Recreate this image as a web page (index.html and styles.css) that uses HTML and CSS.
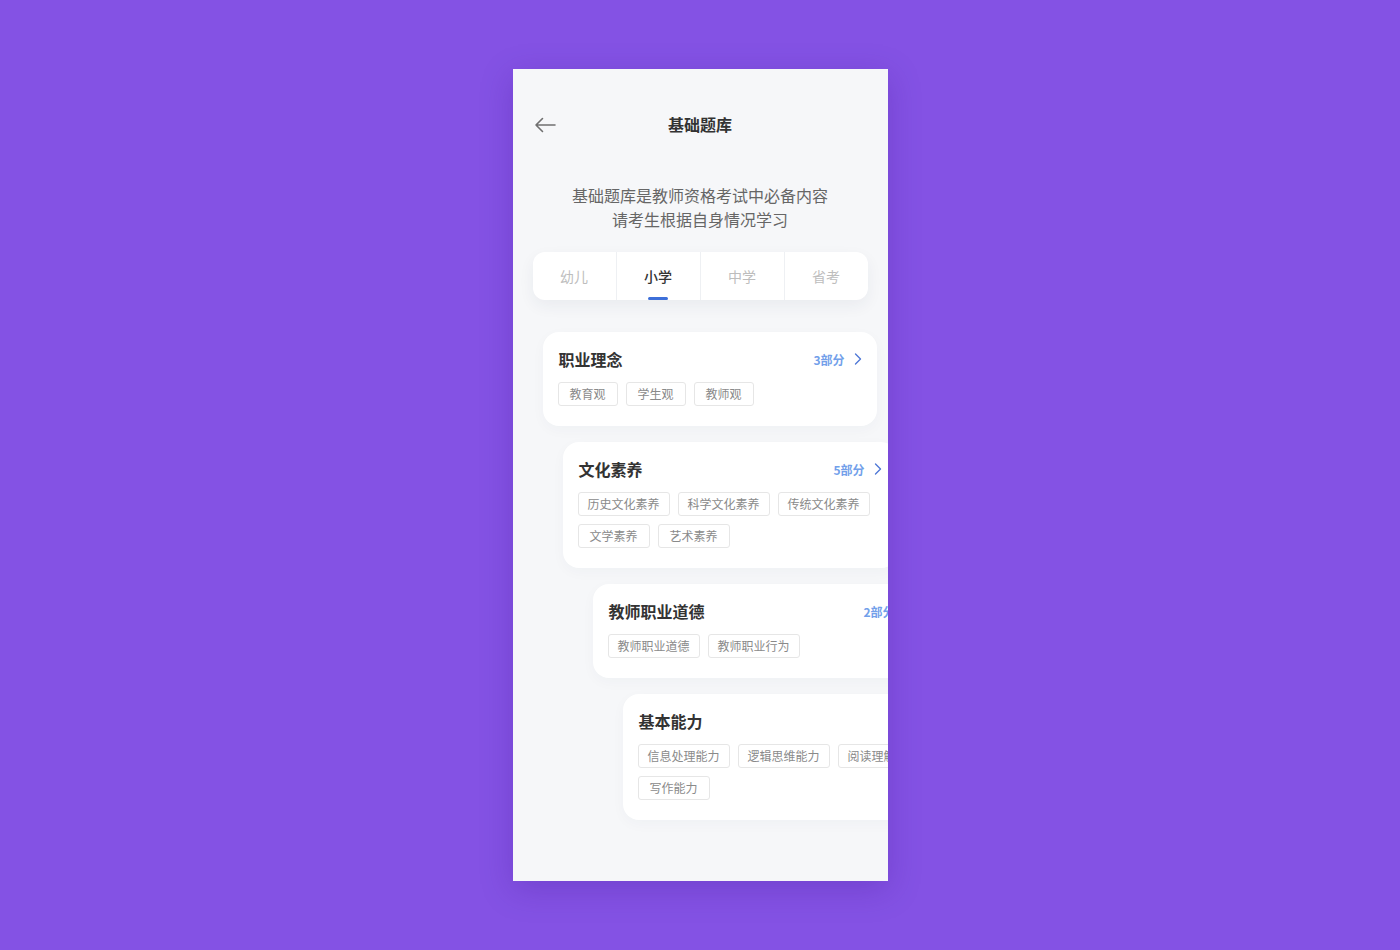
FILE: index.html
```html
<!DOCTYPE html>
<html lang="zh-CN">
<head>
<meta charset="utf-8">
<title>基础题库</title>
<link rel="stylesheet" href="styles.css">
</head>
<body>
<div class="stage">
  <div class="phone">
    <header class="nav">
      <span class="back">
        <svg width="22" height="16" viewBox="0 0 22 16"><path d="M21 8H2M8.5 1.5L2 8l6.5 6.5" fill="none" stroke="#707070" stroke-width="1.6" stroke-linecap="round" stroke-linejoin="round"/></svg>
      </span>
      <h1 class="title">基础题库</h1>
    </header>
    <p class="desc">基础题库是教师资格考试中必备内容<br>请考生根据自身情况学习</p>
    <nav class="tabs">
      <div class="tab">幼儿</div>
      <div class="tab active">小学</div>
      <div class="tab">中学</div>
      <div class="tab">省考</div>
    </nav>
    <section class="list">
      <div class="card c1">
        <div class="card-head"><span class="card-title">职业理念</span><span class="more">3部分<svg width="8" height="12" viewBox="0 0 8 12"><path d="M1.5 1l5 5-5 5" fill="none" stroke="#4f78d6" stroke-width="1.4" stroke-linecap="round" stroke-linejoin="round"/></svg></span></div>
        <div class="tags"><span class="tag">教育观</span><span class="tag">学生观</span><span class="tag">教师观</span></div>
      </div>
      <div class="card c2">
        <div class="card-head"><span class="card-title">文化素养</span><span class="more">5部分<svg width="8" height="12" viewBox="0 0 8 12"><path d="M1.5 1l5 5-5 5" fill="none" stroke="#4f78d6" stroke-width="1.4" stroke-linecap="round" stroke-linejoin="round"/></svg></span></div>
        <div class="tags"><span class="tag long">历史文化素养</span><span class="tag long">科学文化素养</span><span class="tag long">传统文化素养</span><span class="tag">文学素养</span><span class="tag">艺术素养</span></div>
      </div>
      <div class="card c3">
        <div class="card-head"><span class="card-title">教师职业道德</span><span class="more">2部分<svg width="8" height="12" viewBox="0 0 8 12"><path d="M1.5 1l5 5-5 5" fill="none" stroke="#4f78d6" stroke-width="1.4" stroke-linecap="round" stroke-linejoin="round"/></svg></span></div>
        <div class="tags"><span class="tag long">教师职业道德</span><span class="tag long">教师职业行为</span></div>
      </div>
      <div class="card c4">
        <div class="card-head"><span class="card-title">基本能力</span><span class="more">4部分<svg width="8" height="12" viewBox="0 0 8 12"><path d="M1.5 1l5 5-5 5" fill="none" stroke="#4f78d6" stroke-width="1.4" stroke-linecap="round" stroke-linejoin="round"/></svg></span></div>
        <div class="tags"><span class="tag long">信息处理能力</span><span class="tag long">逻辑思维能力</span><span class="tag long">阅读理解能力</span><span class="tag">写作能力</span></div>
      </div>
    </section>
  </div>
</div>
</body>
</html>
```

FILE: styles.css
```css
* { box-sizing: border-box; }
html, body { margin: 0; padding: 0; }
body {
  background: #8452e4;
  font-family: "Noto Sans CJK SC", "Noto Sans", sans-serif;
}
.stage {
  width: 1400px;
  height: 950px;
  display: flex;
  align-items: center;
  justify-content: center;
}
.phone {
  width: 375px;
  height: 812px;
  background: #f6f7f9;
  overflow: hidden;
  box-shadow: 0 8px 30px rgba(60, 20, 140, 0.25);
  display: flex;
  flex-direction: column;
}
.nav {
  position: relative;
  height: 24px;
  margin-top: 44px;
  display: flex;
  align-items: center;
  justify-content: center;
}
.back {
  position: absolute;
  left: 21px;
  top: 4px;
  display: flex;
}
.title {
  margin: 0;
  font-size: 16px;
  font-weight: 600;
  color: #333;
  line-height: 24px;
  transform: translateY(-1px);
}
.desc {
  margin: 46px 0 0;
  text-align: center;
  font-size: 16px;
  line-height: 24px;
  color: #666;
}
.tabs {
  margin: 21px 20px 0;
  height: 48px;
  background: #fff;
  border-radius: 12px;
  box-shadow: 0 6px 16px rgba(30, 50, 90, 0.06);
  display: flex;
}
.tab {
  flex: 1;
  position: relative;
  display: flex;
  align-items: center;
  justify-content: center;
  padding-bottom: 1px;
  font-size: 14px;
  color: #bdbdbd;
  border-left: 1px solid #eef0f3;
}
.tab:first-child { border-left: none; }
.tab.active { color: #333; font-weight: 500; }
.tab.active::after {
  content: "";
  position: absolute;
  left: 50%;
  bottom: 0;
  width: 20px;
  height: 3px;
  margin-left: -10px;
  border-radius: 2px;
  background: #3d6fd9;
}
.list {
  margin-top: 32px;
  display: flex;
  flex-direction: column;
  gap: 16px;
}
.card {
  width: 334px;
  flex-shrink: 0;
  background: #fff;
  border-radius: 16px;
  padding: 16px 15px 20px;
  box-shadow: 0 4px 14px rgba(30, 50, 90, 0.03);
}
.c1 { margin-left: 30px; }
.c2 { margin-left: 50px; }
.c3 { margin-left: 80px; }
.c4 { margin-left: 110px; }
.card-head {
  height: 22px;
  display: flex;
  align-items: center;
  justify-content: space-between;
}
.card-title {
  font-size: 16px;
  font-weight: 600;
  color: #333;
  line-height: 22px;
  padding-left: 1px;
}
.more {
  display: flex;
  align-items: center;
  gap: 9px;
  padding-left: 2px;
  font-size: 12px;
  font-weight: 600;
  color: #72a0ea;
}
.tags {
  margin-top: 12px;
  display: flex;
  flex-wrap: wrap;
  gap: 8px;
}
.tag {
  height: 24px;
  line-height: 22px;
  padding: 0 11px;
  border: 1px solid #e6e6e6;
  border-radius: 3px;
  font-size: 12px;
  color: #8a8a8a;
  white-space: nowrap;
}
.tag.long { padding: 0 9px; }
```
